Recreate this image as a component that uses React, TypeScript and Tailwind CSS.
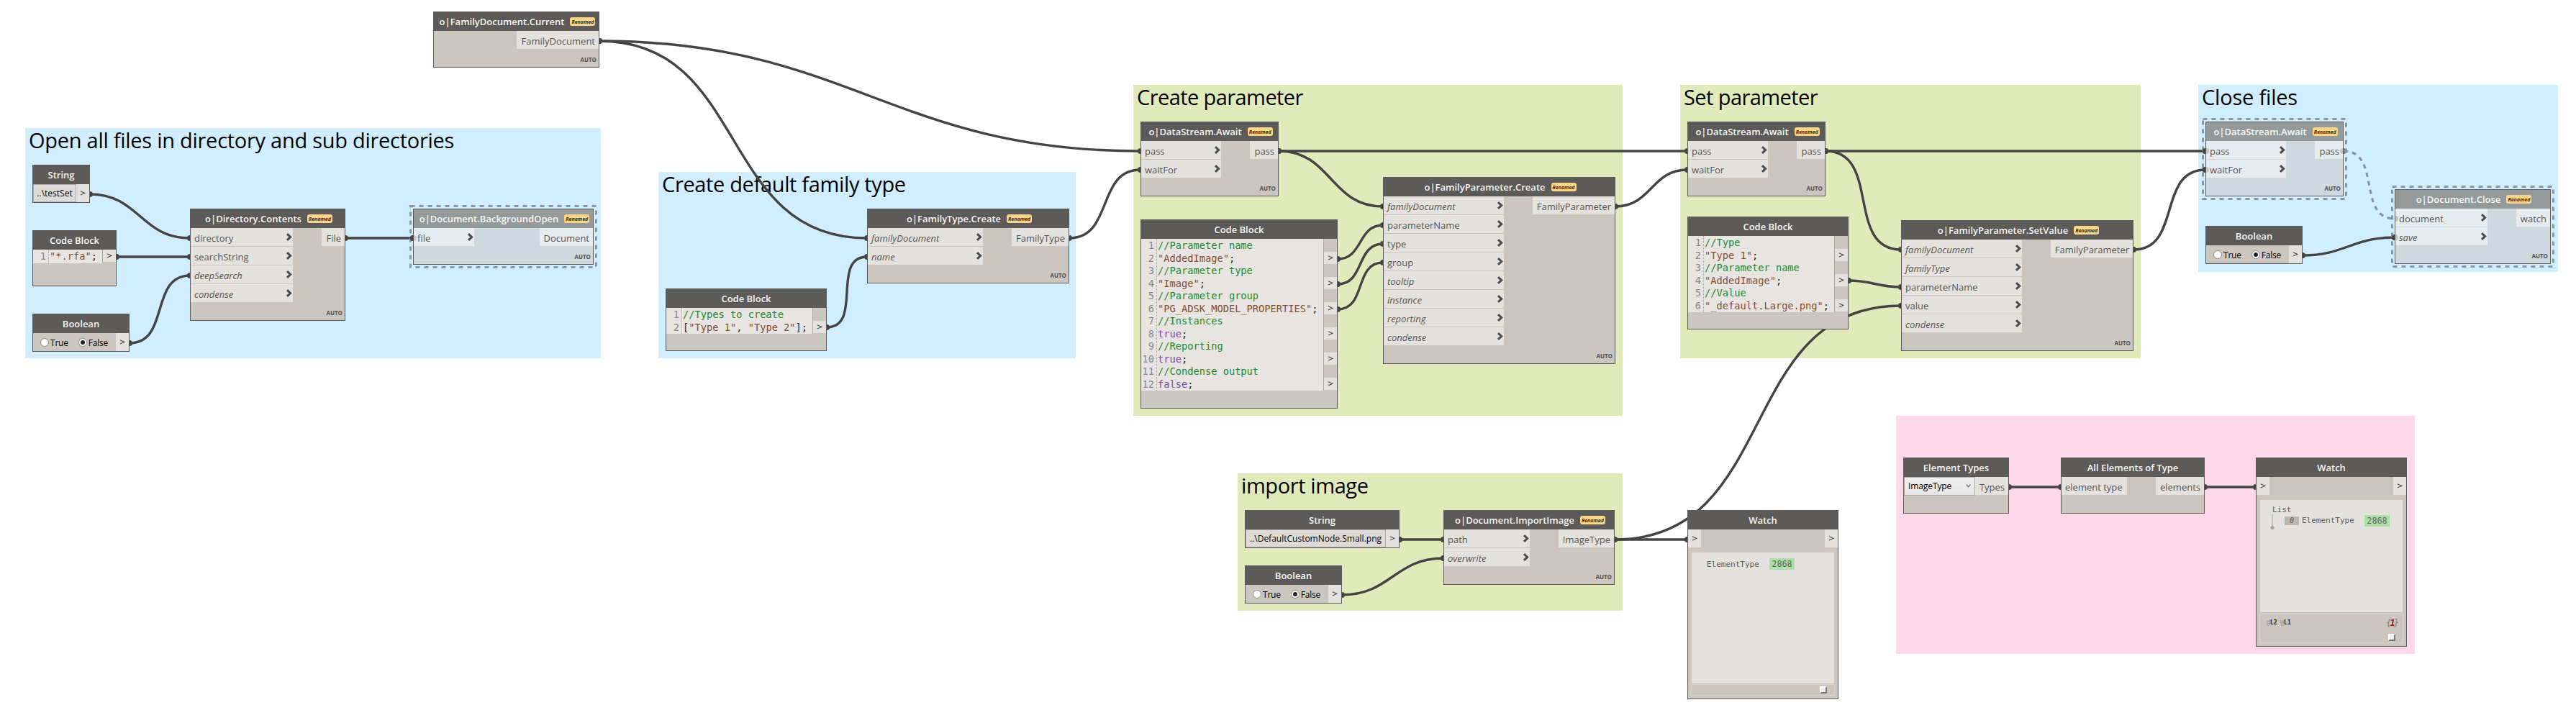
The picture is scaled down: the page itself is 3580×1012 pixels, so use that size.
import React from "react";

type Frozen = { frozen?: boolean };

function Chevron() {
  return (
    <svg className="mr-px shrink-0" width="9" height="11" viewBox="0 0 9 11">
      <path d="M2 1.2 L6.6 5.5 L2 9.8" fill="none" stroke="#4b4b4a" strokeWidth="3" />
    </svg>
  );
}

/** Frame shared by all nodes: one-pixel outline, dark title bar, body. */
function Node({
  pos,
  title,
  renamed,
  auto,
  frozen,
  children,
}: {
  pos: string;
  title: string;
  renamed?: boolean;
  auto?: boolean;
  children?: React.ReactNode;
} & Frozen) {
  return (
    <section
      className={`absolute flex flex-col border border-[#5c5b59] ${frozen ? "bg-[#cdd8df]" : "bg-[#cbc6bf]"} ${pos}`}
    >
      <header
        className={`flex h-[26px] shrink-0 items-center justify-center gap-2 text-[13px] leading-[18px] font-semibold text-[#f7f6f4] ${
          frozen ? "bg-[#949a99]" : "bg-[#5c5b59]"
        } ${renamed ? "pl-[3px]" : ""}`}
      >
        <span>{title}</span>
        {renamed && (
          <span className="flex h-3 w-[35px] items-center justify-center rounded-[3px] bg-[#fcd58b] text-[7px] leading-none font-bold text-[#3a3016] italic">
            Renamed
          </span>
        )}
      </header>
      {children}
      {auto && (
        <span className="mt-auto mr-[3px] mb-[5px] self-end text-[8px] leading-[11px] font-bold text-[#51504e]">
          AUTO
        </span>
      )}
    </section>
  );
}

function OutLabel({ w, text, frozen }: { w: string; text: string } & Frozen) {
  return (
    <div
      className={`flex h-[25px] items-center justify-end pt-[2px] pr-[5px] text-[13px] leading-[18px] text-[#565553] ${w} ${
        frozen ? "bg-[#e5ebee]" : "bg-[#e4e2de]"
      }`}
    >
      {text}
    </div>
  );
}

/** Node with named input rows; a leading "*" marks an input that has a default value. */
function FnNode({
  pos,
  title,
  inputs,
  inW,
  out,
  outW,
  frozen,
}: {
  pos: string;
  title: string;
  inputs: string[];
  inW: string;
  out: string;
  outW: string;
} & Frozen) {
  return (
    <Node pos={pos} title={title} renamed auto frozen={frozen}>
      <div className="flex items-start justify-between">
        <div className={`flex flex-col gap-px ${inW}`}>
          {inputs.map((name) => {
            const optional = name.startsWith("*");
            return (
              <div
                key={name}
                className={`flex h-[25px] items-center justify-between pl-[5px] ${frozen ? "bg-[#e5ebee]" : "bg-[#e4e2de]"}`}
              >
                <span className={`pt-[2px] text-[13px] leading-[18px] text-[#565553] ${optional ? "italic" : ""}`}>
                  {optional ? name.slice(1) : name}
                </span>
                <Chevron />
              </div>
            );
          })}
        </div>
        <OutLabel w={outW} text={out} frozen={frozen} />
      </div>
    </Node>
  );
}

function Arrow({ h = "h-[25px]" }: { h?: string }) {
  return (
    <div className={`flex w-[18px] shrink-0 items-center justify-center bg-[#e4e2de] ${h}`}>
      <svg width="8" height="7" viewBox="0 0 8 7">
        <path d="M0.8 0.8 L6.8 3.4 L0.8 6" fill="none" stroke="#4f4e4d" strokeWidth="1.1" />
      </svg>
    </div>
  );
}

function StringNode({ pos, value }: { pos: string; value: string }) {
  return (
    <Node pos={pos} title="String">
      <div className="flex">
        <div className="flex h-[25px] flex-1 items-center justify-center overflow-hidden border border-[#abadb3] bg-[#dedbd7] text-[12px] leading-4 whitespace-nowrap text-black">
          {value}
        </div>
        <Arrow />
      </div>
    </Node>
  );
}

function Radio({ on, label }: { on?: boolean; label: string }) {
  return (
    <div className="flex items-center gap-[2px]">
      <span className="flex size-3 items-center justify-center rounded-full border border-[#8a8a8a] bg-white">
        {on && <span className="size-1.5 rounded-full bg-[#212121]" />}
      </span>
      <span className="pt-[2px] text-[12px] leading-4 tracking-[-0.2px] text-black">{label}</span>
    </div>
  );
}

function BooleanNode({ pos }: { pos: string }) {
  return (
    <Node pos={pos} title="Boolean">
      <div className="flex">
        <div className="flex h-[25px] flex-1 items-center gap-[14px] pl-[10px]">
          <Radio label="True" />
          <Radio label="False" on />
        </div>
        <Arrow />
      </div>
    </Node>
  );
}

type Tok = [string, string];
const c = (t: string): Tok[] => [[t, "text-[#238a2a]"]];
const s = (t: string): Tok[] => [
  [t, "text-[#83502e]"],
  [";", "text-[#262626]"],
];
const k = (t: string): Tok[] => [
  [t, "text-[#7d4ba6]"],
  [";", "text-[#262626]"],
];

function CodeNode({ pos, lines }: { pos: string; lines: Tok[][] }) {
  return (
    <Node pos={pos} title="Code Block">
      <div className="flex font-['DejaVu_Sans_Mono',monospace] text-[13.7px] leading-[17.57px] whitespace-pre">
        <div className="w-[22px] shrink-0 border-r border-dotted border-[#a5a3a1] bg-[#e8e4e1] pt-px pr-[3px] text-right text-[#8a8988]">
          {lines.map((_, i) => (
            <div key={i} className="-ml-2 h-[17.5px]">
              {i + 1}
            </div>
          ))}
        </div>
        <div className="flex-1 border-r border-[#aaa8a5] bg-[#e8e4e1] pt-px pl-px">
          {lines.map((line, i) => (
            <div key={i} className="h-[17.5px]">
              {line.map(([t, cls], j) => (
                <span key={j} className={cls}>
                  {t}
                </span>
              ))}
            </div>
          ))}
        </div>
        <div className="flex w-[18px] shrink-0 flex-col">
          {lines.map((line, i) => (
            <div key={i} className="h-[17.55px]">
              {line.length > 1 && <Arrow h="h-[17px]" />}
            </div>
          ))}
        </div>
      </div>
    </Node>
  );
}

function Grip() {
  return (
    <span className="block size-[10px] border-t-2 border-r-2 border-b-2 border-l-2 border-t-white border-r-[#77787c] border-b-[#77787c] border-l-white bg-[#efeff1]" />
  );
}

function Badge({ id }: { id: string }) {
  return (
    <span className="flex h-4 w-[35px] items-center justify-center bg-[#ace0a8] pt-px text-[11.8px] leading-none text-[#62665f]">
      {id}
    </span>
  );
}

function WatchNode({ pos, list }: { pos: string; list?: boolean }) {
  return (
    <Node pos={pos} title="Watch">
      <div className="flex justify-between">
        <Arrow />
        <Arrow />
      </div>
      <div className="mx-1 mt-[7px] flex flex-1 flex-col pb-1 font-['DejaVu_Sans_Mono',monospace] text-[11px] text-[#5f5e5d]">
        {list ? (
          <>
            <div className="mx-px h-[156px] bg-[#e4e2de] pt-[8px] pl-[17px]">
              <div className="leading-[12px]">List</div>
              <div className="flex items-start">
                <svg className="-ml-[4px] shrink-0" width="8" height="22" viewBox="0 0 8 22">
                  <path d="M4 0V18" stroke="#a3a2a0" />
                  <circle cx="4" cy="18.5" r="2.5" fill="#a3a2a0" />
                </svg>
                <span className="mt-[3px] ml-[13px] flex h-[12px] w-5 items-center justify-center bg-[#b9b7b4] text-[10px] leading-none italic">
                  0
                </span>
                <span className="mt-[3px] ml-[4px] w-[73px] leading-[12px]">ElementType</span>
                <span className="mt-[1px] ml-[14px]">
                  <Badge id="2868" />
                </span>
              </div>
            </div>
            <div className="mt-px flex flex-1 flex-col border border-[#d6d3cf] px-[9px]">
              <div className="flex items-center justify-between pt-[5px] leading-4">
                <span className="text-[8px] font-bold text-[#1d1d1d]">
                  <span className="font-normal text-[#8d8b88]">@</span>L2 <span className="font-normal text-[#8d8b88]">@</span>L1
                </span>
                <span className="-mr-[2px] text-[12px] tracking-[-2px] text-[#7f7d7a] italic">
                  {"{"}
                  <b className="text-[#a31414]">1</b>
                  {"}"}
                </span>
              </div>
              <div className="mt-[7px] flex justify-end pr-px">
                <Grip />
              </div>
            </div>
          </>
        ) : (
          <>
            <div className="mx-px flex h-[182px] items-start bg-[#e4e2de] pt-[8px] pl-[21px]">
              <span className="w-[73px] pt-[2px] leading-[13px]">ElementType</span>
              <span className="ml-[14px]">
                <Badge id="2868" />
              </span>
            </div>
            <div className="mt-px flex h-4 items-center justify-end border border-[#d3d3d3] pr-[10px]">
              <Grip />
            </div>
          </>
        )}
      </div>
    </Node>
  );
}

function Group({ pos, title, track }: { pos: string; title?: string; track?: string }) {
  return (
    <div className={`absolute pt-[2px] pl-[5px] ${pos}`}>
      {title && <h2 className={`text-[29px] leading-none whitespace-nowrap text-black ${track ?? ""}`}>{title}</h2>}
    </div>
  );
}

const WIRES: [number, number, number, number][] = [
  [125, 270, 264, 331],
  [162, 357, 264, 357],
  [180, 477, 264, 383],
  [480, 331, 574, 331],
  [833, 57, 1205, 331],
  [833, 57, 1585, 210],
  [1149, 455, 1205, 357],
  [1486, 331, 1585, 236],
  [1777, 210, 2345, 210],
  [1777, 210, 1922, 287],
  [1859, 360, 1922, 313],
  [1859, 395, 1922, 339],
  [1859, 430, 1922, 365],
  [2245, 287, 2345, 236],
  [2537, 210, 3065, 210],
  [2537, 210, 2642, 347],
  [2569, 390, 2642, 399],
  [2244, 750, 2642, 425],
  [2244, 750, 2345, 750],
  [2965, 347, 3065, 236],
  [3200, 355, 3328, 330],
  [1945, 750, 2006, 750],
  [1865, 827, 2006, 776],
  [2792, 677, 2864, 677],
  [3064, 677, 3135, 677],
];

function curve([x1, y1, x2, y2]: [number, number, number, number]) {
  const o = 0.45 * Math.hypot(x2 - x1, y2 - y1);
  return `M${x1} ${y1}C${x1 + o} ${y1} ${x2 - o} ${y2} ${x2} ${y2}`;
}

function Wires() {
  return (
    <svg className="absolute inset-0" width="3580" height="1012" viewBox="0 0 3580 1012">
      {WIRES.map((w, i) => (
        <g key={i} fill="#444444">
          <path d={curve(w)} fill="none" stroke="#444444" strokeWidth="3.4" />
          <circle cx={w[0]} cy={w[1]} r="4" />
          <circle cx={w[2]} cy={w[3]} r="4" />
        </g>
      ))}
      <circle cx="3257" cy="210" r="4" fill="#6b767d" />
      <path d={curve([3257, 210, 3328, 304])} fill="none" stroke="#84929a" strokeWidth="3" strokeDasharray="6 6" />
    </svg>
  );
}

/** Dashed outlines of frozen nodes, and the port dots that show through them. */
function FrozenMarks() {
  const rects: [number, number, number, number][] = [
    [570.5, 286.5, 258, 85],
    [3061.5, 165.5, 199, 111],
    [3324.5, 259.5, 224, 111],
  ];
  return (
    <svg className="absolute inset-0" width="3580" height="1012" viewBox="0 0 3580 1012">
      {rects.map(([x, y, w, h]) => (
        <rect key={x} x={x} y={y} width={w} height={h} fill="none" stroke="#8b999f" strokeWidth="3" strokeDasharray="6 6" />
      ))}
      <g fill="#c2c5c5">
        <path d="M575 327a4 4 0 0 1 0 8z" />
        <path d="M3066 206a4 4 0 0 1 0 8z" />
        <path d="M3066 232a4 4 0 0 1 0 8z" />
        <path d="M3329 300a4 4 0 0 1 0 8z" />
        <path d="M3329 326a4 4 0 0 1 0 8z" />
        <path d="M3256 206a4 4 0 0 0 0 8z" />
      </g>
      <g fill="#444444">
        <path d="M574 327a4 4 0 0 0 0 8z" />
        <path d="M3065 206a4 4 0 0 0 0 8z" />
        <path d="M3065 232a4 4 0 0 0 0 8z" />
        <path d="M3328 326a4 4 0 0 0 0 8z" />
      </g>
    </svg>
  );
}

export default function App() {
  return (
    <main className="relative h-[1012px] w-[3580px] overflow-hidden bg-white font-['Open_Sans',sans-serif] whitespace-nowrap">
      <Group
        pos="left-[35px] top-[178px] h-[320px] w-[800px] bg-[#d0eeff]"
        title="Open all files in directory and sub directories"
        track="tracking-[-0.27px]"
      />
      <Group
        pos="left-[915px] top-[239px] h-[259px] w-[580px] bg-[#d0eeff]"
        title="Create default family type"
        track="tracking-[-0.35px]"
      />
      <Group
        pos="left-[1575px] top-[118px] h-[460px] w-[680px] bg-[#e0eaba]"
        title="Create parameter"
        track="tracking-[-0.58px]"
      />
      <Group
        pos="left-[2335px] top-[118px] h-[380px] w-[640px] bg-[#e0eaba]"
        title="Set parameter"
        track="tracking-[-0.58px]"
      />
      <Group pos="left-[3055px] top-[118px] h-[260px] w-[500px] bg-[#d0eeff]" title="Close files" track="tracking-[-0.2px]" />
      <Group pos="left-[1720px] top-[658px] h-[191px] w-[535px] bg-[#e0eaba]" title="import image" track="tracking-[-0.4px]" />
      <Group pos="left-[2635px] top-[578px] h-[331px] w-[721px] bg-[#ffd9ea]" />

      <Wires />

      <StringNode pos="left-[45px] top-[229px] h-[53px] w-[80px]" value="..\testSet" />
      <CodeNode pos="left-[45px] top-[320px] h-[78px] w-[117px]" lines={[s('"*.rfa"')]} />
      <BooleanNode pos="left-[45px] top-[436px] h-[53px] w-[135px]" />
      <FnNode
        pos="left-[264px] top-[290px] h-[156px] w-[216px]"
        title="o|Directory.Contents"
        inputs={["directory", "searchString", "*deepSearch", "*condense"]}
        inW="w-[142px]"
        out="File"
        outW="w-[32px]"
      />
      <FnNode
        pos="left-[574px] top-[290px] h-[78px] w-[251px]"
        title="o|Document.BackgroundOpen"
        inputs={["file"]}
        inW="w-[84px]"
        out="Document"
        outW="w-[74px]"
        frozen
      />

      <Node pos="left-[602px] top-[16px] h-[78px] w-[231px]" title="o|FamilyDocument.Current" renamed auto>
        <div className="flex justify-end">
          <OutLabel w="w-[114px]" text="FamilyDocument" />
        </div>
      </Node>

      <FnNode
        pos="left-[1205px] top-[290px] h-[104px] w-[281px]"
        title="o|FamilyType.Create"
        inputs={["*familyDocument", "*name"]}
        inW="w-[160px]"
        out="FamilyType"
        outW="w-[79px]"
      />
      <CodeNode
        pos="left-[925px] top-[401px] h-[87px] w-[224px]"
        lines={[
          c("//Types to create"),
          [
            ["[", "text-[#262626]"],
            ['"Type 1"', "text-[#83502e]"],
            [", ", "text-[#262626]"],
            ['"Type 2"', "text-[#83502e]"],
            ["];", "text-[#262626]"],
          ],
        ]}
      />

      <FnNode
        pos="left-[1585px] top-[169px] h-[104px] w-[192px]"
        title="o|DataStream.Await"
        inputs={["pass", "waitFor"]}
        inW="w-[111px]"
        out="pass"
        outW="w-[39px]"
      />
      <CodeNode
        pos="left-[1585px] top-[305px] h-[263px] w-[274px]"
        lines={[
          c("//Parameter name"),
          s('"AddedImage"'),
          c("//Parameter type"),
          s('"Image"'),
          c("//Parameter group"),
          s('"PG_ADSK_MODEL_PROPERTIES"'),
          c("//Instances"),
          k("true"),
          c("//Reporting"),
          k("true"),
          c("//Condense output"),
          k("false"),
        ]}
      />
      <FnNode
        pos="left-[1922px] top-[246px] h-[260px] w-[323px]"
        title="o|FamilyParameter.Create"
        inputs={["*familyDocument", "parameterName", "type", "group", "*tooltip", "*instance", "*reporting", "*condense"]}
        inW="w-[167px]"
        out="FamilyParameter"
        outW="w-[114px]"
      />

      <FnNode
        pos="left-[2345px] top-[169px] h-[104px] w-[192px]"
        title="o|DataStream.Await"
        inputs={["pass", "waitFor"]}
        inW="w-[111px]"
        out="pass"
        outW="w-[39px]"
      />
      <CodeNode
        pos="left-[2345px] top-[301px] h-[157px] w-[224px]"
        lines={[
          c("//Type"),
          s('"Type 1"'),
          c("//Parameter name"),
          s('"AddedImage"'),
          c("//Value"),
          s('"_default.Large.png"'),
        ]}
      />
      <FnNode
        pos="left-[2642px] top-[306px] h-[182px] w-[323px]"
        title="o|FamilyParameter.SetValue"
        inputs={["*familyDocument", "*familyType", "parameterName", "value", "*condense"]}
        inW="w-[167px]"
        out="FamilyParameter"
        outW="w-[114px]"
      />

      <FnNode
        pos="left-[3065px] top-[169px] h-[104px] w-[192px]"
        title="o|DataStream.Await"
        inputs={["pass", "waitFor"]}
        inW="w-[111px]"
        out="pass"
        outW="w-[39px]"
        frozen
      />
      <BooleanNode pos="left-[3065px] top-[314px] h-[53px] w-[135px]" />
      <FnNode
        pos="left-[3328px] top-[263px] h-[104px] w-[217px]"
        title="o|Document.Close"
        inputs={["document", "*save"]}
        inW="w-[128px]"
        out="watch"
        outW="w-[47px]"
        frozen
      />

      <StringNode pos="left-[1730px] top-[709px] h-[53px] w-[215px]" value="..\DefaultCustomNode.Small.png" />
      <BooleanNode pos="left-[1730px] top-[786px] h-[53px] w-[135px]" />
      <FnNode
        pos="left-[2006px] top-[709px] h-[104px] w-[238px]"
        title="o|Document.ImportImage"
        inputs={["path", "*overwrite"]}
        inW="w-[119px]"
        out="ImageType"
        outW="w-[77px]"
      />
      <WatchNode pos="left-[2345px] top-[709px] h-[263px] w-[210px]" />

      <Node pos="left-[2645px] top-[636px] h-[78px] w-[147px]" title="Element Types">
        <div className="flex">
          <div className="flex h-[26px] flex-1 items-center justify-between border border-[#acacac] bg-gradient-to-b from-[#f0f0f0] to-[#e5e5e5] pr-[5px] pb-px pl-[5px] text-[12px] leading-4 tracking-[-0.1px] text-black">
            ImageType
            <svg width="7" height="5" viewBox="0 0 7 5">
              <path d="M0.8 0.6 L3.5 3.8 L6.2 0.6" fill="none" stroke="#606060" strokeWidth="1.2" />
            </svg>
          </div>
          <OutLabel w="w-[46px]" text="Types" />
        </div>
      </Node>
      <Node pos="left-[2864px] top-[636px] h-[78px] w-[200px]" title="All Elements of Type">
        <div className="flex justify-between">
          <div className="flex h-[25px] w-[91px] items-center bg-[#e4e2de] pt-[2px] pl-[5px] text-[13px] leading-[18px] text-[#565553]">
            element type
          </div>
          <OutLabel w="w-[67px]" text="elements" />
        </div>
      </Node>
      <WatchNode pos="left-[3135px] top-[636px] h-[263px] w-[210px]" list />

      <FrozenMarks />
    </main>
  );
}
